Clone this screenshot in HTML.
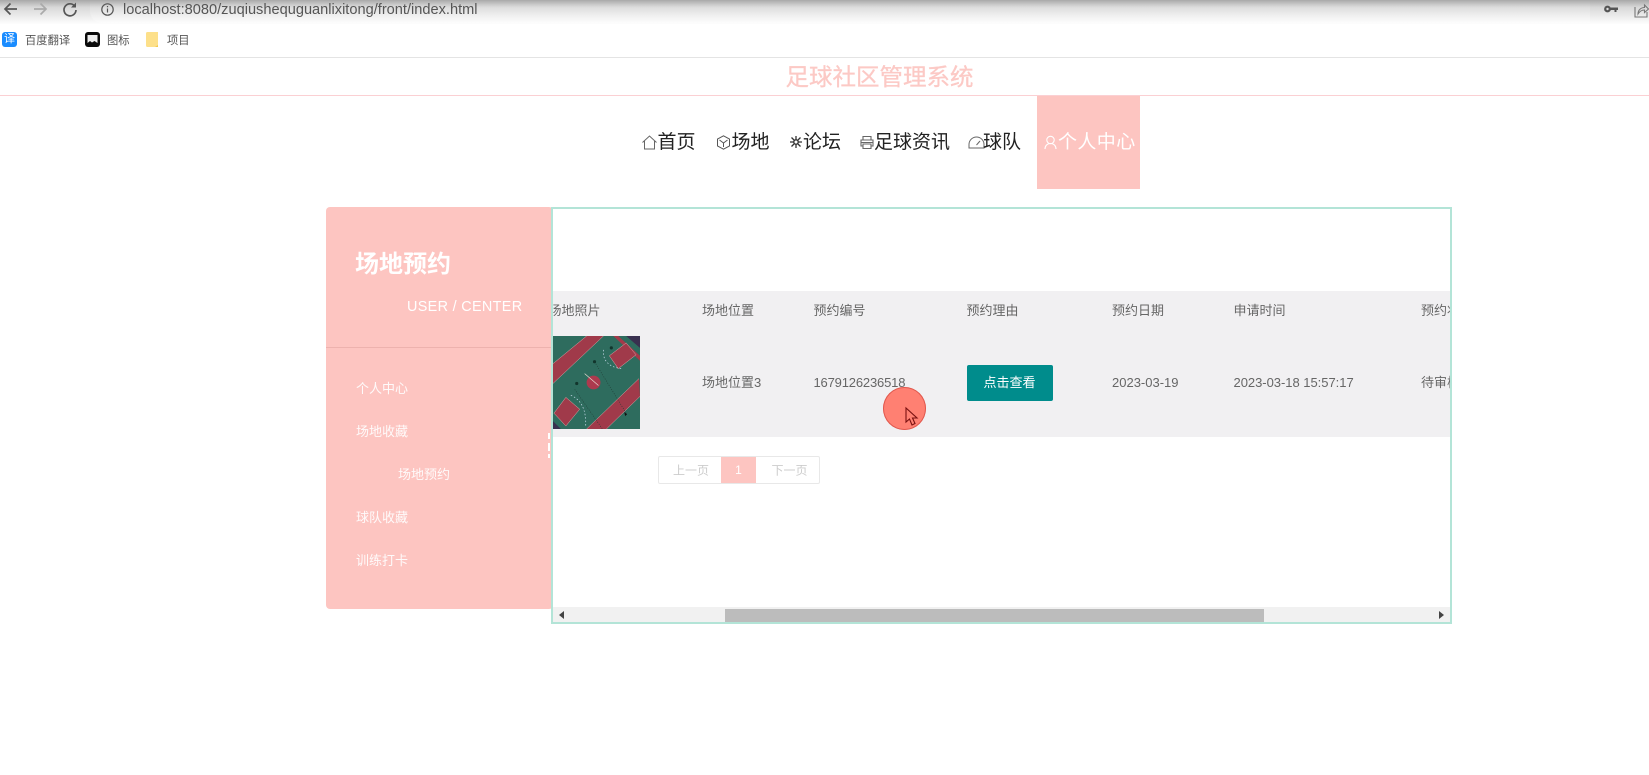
<!DOCTYPE html>
<html lang="zh">
<head>
<meta charset="utf-8">
<title>足球社区管理系统</title>
<style>
html,body{margin:0;padding:0;background:#fff;}
body{width:1649px;height:775px;overflow:hidden;position:relative;font-family:"Liberation Sans","Noto Sans CJK SC",sans-serif;}
.a{position:absolute;white-space:nowrap;}
.t{transform:translateY(-50%);}
.nav{font-size:19px;color:#222;line-height:24px;}
.m{font-size:13px;color:#fff;line-height:18px;opacity:.92;}
.c{font-size:13px;color:#666;line-height:18px;}
svg{position:absolute;overflow:visible;}
</style>
</head>
<body>
<!-- browser chrome -->
<div class="a" style="left:0;top:0;width:1649px;height:24px;background:linear-gradient(#a8a8a8 0,#d8d8d8 30%,#f0f0f0 75%,#fdfdfd 100%);"></div>
<div class="a" style="left:90px;top:0;width:1500px;height:23px;border-radius:0 0 0 12px;background:linear-gradient(rgba(255,255,255,0) 0,rgba(255,255,255,.35) 100%);"></div>
<svg style="left:3px;top:1px" width="16" height="16" viewBox="0 0 16 16" fill="none" stroke="#555" stroke-width="1.7"><path d="M14 8H2M7.500 2.500 2 8l5.500 5.500"/></svg>
<svg style="left:32px;top:1px" width="16" height="16" viewBox="0 0 16 16" fill="none" stroke="#aaa" stroke-width="1.700"><path d="M2 8h12M8.500 2.500 14 8l-5.500 5.500"/></svg>
<svg style="left:62px;top:1px" width="16" height="16" viewBox="0 0 16 16" fill="none" stroke="#555" stroke-width="1.700"><path d="M13 5.500A6 6 0 1 0 14 9"/><path d="M14 1.500v5h-5" fill="#555" stroke="none"/></svg>
<svg style="left:101px;top:3px" width="13" height="13" viewBox="0 0 13 13" fill="none" stroke="#555" stroke-width="1.200"><circle cx="6.500" cy="6.500" r="5.700"/><path d="M6.500 5.500v4M6.500 3v1.300"/></svg>
<div class="a t" style="left:123px;top:9.500px;font-size:14.600px;color:#555;line-height:18px;">localhost:8080/zuqiushequguanlixitong/front/index.html</div>
<svg style="left:1604px;top:4px" width="14" height="10" viewBox="0 0 14 10" fill="#555"><circle cx="3.500" cy="5" r="3.400"/><path d="M6 3.500h8v2.500h-1.500v2h-2V6H6z"/><circle cx="3.500" cy="5" r="1.200" fill="#ddd"/></svg>
<svg style="left:1634px;top:3px" width="15" height="15" viewBox="0 0 15 15" fill="none" stroke="#777" stroke-width="1.100"><path d="M1 4v10h12V9"/><path d="M4 11c0-4 3-6.500 6.500-6.500V2L14.500 6l-4 3.500V7C8 7 5.500 8.500 4 11z"/></svg>

<!-- bookmarks -->
<div class="a" style="left:0;top:24px;width:1649px;height:33px;background:#fff;"></div>
<div class="a" style="left:2px;top:32px;width:15px;height:15px;border-radius:3px;background:#1a8cff;color:#fff;font-size:11px;line-height:15px;text-align:center;">译</div>
<div class="a t" style="left:25px;top:40px;font-size:11.300px;color:#555;">百度翻译</div>
<svg style="left:85px;top:32px" width="15" height="15" viewBox="0 0 15 15"><rect width="15" height="15" rx="3" fill="#0a0a0a"/><path d="M2.500 3h10v8L9.500 9 7 10.500 5 9l-2.500 2z" fill="#eee"/></svg>
<div class="a t" style="left:107px;top:40px;font-size:11.300px;color:#555;">图标</div>
<svg style="left:146px;top:32px" width="12" height="15" viewBox="0 0 12 15"><path d="M0 1.500Q0 0 1.500 0H8l4 0v15H1.500Q0 15 0 13.500z" fill="#fde08a"/><path d="M12 15H9l3-2z" fill="#f2c94c"/></svg>
<div class="a t" style="left:167px;top:40px;font-size:11.300px;color:#555;">项目</div>
<div class="a" style="left:0;top:57px;width:1649px;height:1px;background:#e4e4e4;"></div>

<!-- title -->
<div class="a t" style="left:785.500px;top:76.500px;font-size:23.500px;color:#fcc9c5;line-height:30px;-webkit-text-stroke:.3px #fcc9c5;">足球社区管理系统</div>
<div class="a" style="left:0;top:95px;width:1649px;height:1px;background:#fbd0d3;"></div>

<!-- nav -->
<div class="a" style="left:1037px;top:96px;width:103px;height:93px;background:#fdc5c1;"></div>
<svg style="left:642px;top:135px" width="15" height="15" viewBox="0 0 15 15" fill="none" stroke="#666" stroke-width="1"><path d="M.5 7.500 7.500 1l7 6.500M2.500 6v8h10V6"/></svg>
<div class="a nav t" style="left:657.500px;top:143px;">首页</div>
<svg style="left:716px;top:135px" width="15" height="15" viewBox="0 0 15 15" fill="none" stroke="#555" stroke-width="1"><path d="M7.500.8 13.500 4v7l-6 3.200L1.500 11V4z"/><path d="M3.500 5 7.500 8l4-3M7.500 8v4"/></svg>
<div class="a nav t" style="left:731.500px;top:143px;">场地</div>
<svg style="left:789px;top:135px" width="14" height="14" viewBox="0 0 14 14" fill="none" stroke="#333" stroke-width="1.300"><path d="M7 1v12M1 7h12M2.500 2.500l9 9M11.500 2.500l-9 9"/><circle cx="7" cy="7" r="2.200" fill="#fff"/></svg>
<div class="a nav t" style="left:803px;top:143px;">论坛</div>
<svg style="left:860px;top:135px" width="14" height="15" viewBox="0 0 14 15" fill="none" stroke="#666" stroke-width="1.100"><path d="M3 5V1.500h8V5M3 11H1V5h12v6h-2"/><path d="M3 9h8v4.500H3zM1 7.500h12"/></svg>
<div class="a nav t" style="left:874px;top:143px;">足球资讯</div>
<svg style="left:968px;top:135px" width="17" height="15" viewBox="0 0 17 15" fill="none" stroke="#666" stroke-width="1"><path d="M1 13V9.500a7.500 7.500 0 0 1 15 0V13zM8.500 10 12 6"/></svg>
<div class="a nav t" style="left:983px;top:143px;">球队</div>
<svg style="left:1044px;top:135px" width="13" height="15" viewBox="0 0 13 15" fill="none" stroke="#fff" stroke-width="1.100"><circle cx="6.500" cy="5" r="3.700"/><path d="M1 14c0-3 2-5.500 5.500-5.500S12 11 12 14"/></svg>
<div class="a nav t" style="left:1058px;top:143px;color:#fff;letter-spacing:.4px;">个人中心</div>

<!-- left panel -->
<div class="a" style="left:326px;top:207px;width:227px;height:402px;border-radius:4px;background:#fdc5c1;"></div>
<div class="a t" style="left:355px;top:265px;font-size:24px;font-weight:bold;color:#fff;line-height:30px;">场地预约</div>
<div class="a t" style="left:407px;top:307px;font-size:14.400px;letter-spacing:.33px;color:#fff;line-height:18px;">USER / CENTER</div>
<div class="a" style="left:326px;top:347px;width:226px;height:1px;background:#edb2ae;"></div>
<div class="a m t" style="left:356px;top:389px;">个人中心</div>
<div class="a m t" style="left:356px;top:432px;">场地收藏</div>
<div class="a m t" style="left:398px;top:475px;">场地预约</div>
<div class="a m t" style="left:356px;top:518px;">球队收藏</div>
<div class="a m t" style="left:356px;top:561px;">训练打卡</div>
<div class="a" style="left:548px;top:433px;width:2px;height:6px;background:#fff;"></div>
<div class="a" style="left:548px;top:443px;width:2px;height:8px;background:#fff;"></div>
<div class="a" style="left:548px;top:454px;width:2px;height:4px;background:#fff;"></div>

<!-- content box -->
<div class="a" style="left:551px;top:207px;width:897px;height:413px;border:2px solid #b3e4d7;box-sizing:content-box;overflow:hidden;background:#fff;">
  <div class="a" style="left:0;top:82px;width:899px;height:146px;background:#f1f0f2;"></div>
  <div class="a c t" style="left:-4.500px;top:101.500px;">场地照片</div>
  <div class="a c t" style="left:149px;top:101.500px;">场地位置</div>
  <div class="a c t" style="left:260.500px;top:101.500px;">预约编号</div>
  <div class="a c t" style="left:413.500px;top:101.500px;">预约理由</div>
  <div class="a c t" style="left:559px;top:101.500px;">预约日期</div>
  <div class="a c t" style="left:680.500px;top:101.500px;">申请时间</div>
  <div class="a c t" style="left:868px;top:101.500px;">预约状态</div>

  <svg style="left:0;top:127px" width="87" height="93" viewBox="0 0 88 94" preserveAspectRatio="none">
    <rect width="88" height="94" fill="#2e6c5e"/>
    <path d="M74 0h14v12z" fill="#39304f"/>
    <path d="M66 0 88 20v5L61 0z" fill="#a33a4a"/>
    <path d="M0 28 34 0h17L0 48z" fill="#a03a4a"/>
    <path d="M87 43 34 94h20l34-33z" fill="#a03a4a"/>
    <path d="M74 7 84 19 66 33 57 20z" fill="#a03a4a" stroke="#d9a9a9" stroke-width=".5"/>
    <path d="M13 62 27 74 13 91 1 78z" fill="#a03a4a" stroke="#d9a9a9" stroke-width=".5"/>
    <path d="M0 86 8 94H0z" fill="#39304f"/>
    <circle cx="41" cy="47" r="7" fill="#ad3a4e"/>
    <path d="M32 38 46 50" stroke="#e8d8d0" stroke-width=".7"/>
    <path d="M51 14C50 24 56 32 70 33M18 60C28 64 34 74 33 92" fill="none" stroke="#cde" stroke-width=".7" stroke-dasharray="1.500 2"/>
    <path d="M0 28 34 0M0 48 51 0M87 43 34 94M88 61 54 94" fill="none" stroke="#d9a9a9" stroke-width=".5"/>
    <path d="M42 26 74 78M22 54 50 94" stroke="#1f3a34" stroke-width=".6" stroke-dasharray="1 1.500"/>
    <circle cx="42" cy="26" r="1.600" fill="#12352c"/><circle cx="24" cy="48" r="1.600" fill="#12352c"/><circle cx="59" cy="12" r="1.600" fill="#12352c"/>
    <path d="M72 77l3 2-2 2z" fill="#111"/>
  </svg>

  <div class="a c t" style="left:149px;top:173.500px;">场地位置3</div>
  <div class="a c t" style="left:260.500px;top:173.500px;letter-spacing:-.17px;">1679126236518</div>
  <div class="a" style="left:413.500px;top:155.500px;width:86px;height:36px;border-radius:2px;background:#008c8c;color:#fff;font-size:13px;line-height:36px;text-align:center;">点击查看</div>
  <div class="a c t" style="left:559px;top:173.500px;">2023-03-19</div>
  <div class="a c t" style="left:680.500px;top:173.500px;letter-spacing:-.03px;">2023-03-18 15:57:17</div>
  <div class="a c t" style="left:868px;top:173.500px;">待审核</div>

  <!-- pagination -->
  <div class="a" style="left:105px;top:247px;width:160px;height:26px;border:1px solid #e8e8e8;border-radius:2px;"></div>
  <div class="a" style="left:168px;top:248px;width:35px;height:26px;background:#fdc5c1;color:#fff;font-size:12px;line-height:26px;text-align:center;">1</div>
  <div class="a t" style="left:120px;top:261px;font-size:12px;color:#ccc;">上一页</div>
  <div class="a t" style="left:218.500px;top:261px;font-size:12px;color:#ccc;">下一页</div>

  <!-- scrollbar -->
  <div class="a" style="left:0;top:398px;width:899px;height:15px;background:#f1f1f1;"></div>
  <div class="a" style="left:172px;top:400px;width:539px;height:13px;background:#bcbcbc;"></div>
  <svg style="left:6px;top:402px" width="6" height="8" viewBox="0 0 6 8"><path d="M5 0v8L0 4z" fill="#444"/></svg>
  <svg style="left:885px;top:402px" width="6" height="8" viewBox="0 0 6 8"><path d="M1 0v8l5-4z" fill="#444"/></svg>
</div>

<!-- click highlight + cursor -->
<div class="a" style="left:883px;top:387px;width:43px;height:43px;border-radius:50%;background:#ff8072;box-shadow:inset 0 0 0 1px #e0584e;"></div>
<svg style="left:905px;top:407px" width="13" height="20" viewBox="0 0 13 20"><path d="M1 1v14l3.500-3 2.500 6 3-1.500-2.500-5.500H12z" fill="#ff8072" stroke="#7a1010" stroke-width="1.100"/></svg>
</body>
</html>
